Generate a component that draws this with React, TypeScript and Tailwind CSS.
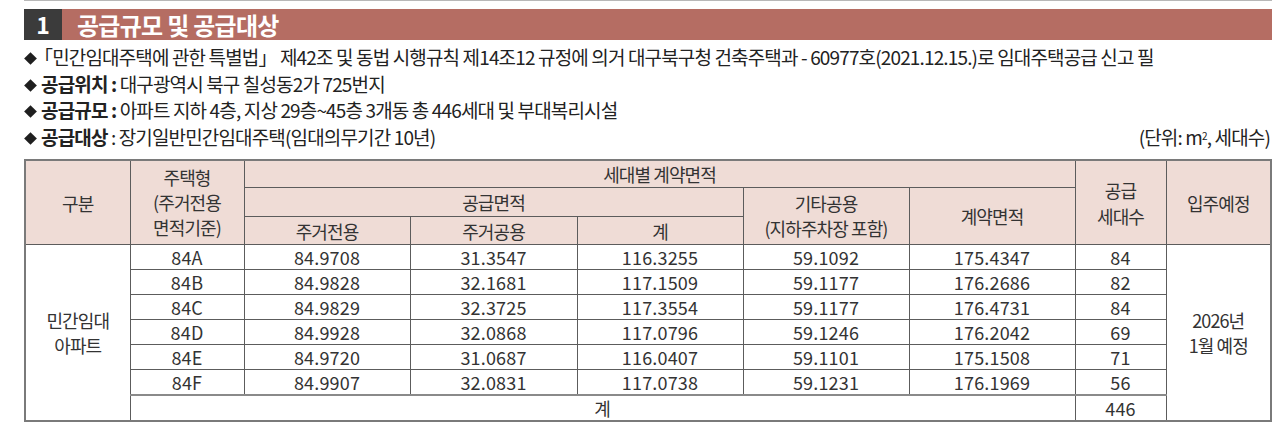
import React from 'react';

const rows = [
  { type: '84A', a: '84.9708', b: '31.3547', c: '116.3255', d: '59.1092', e: '175.4347', n: '84' },
  { type: '84B', a: '84.9828', b: '32.1681', c: '117.1509', d: '59.1177', e: '176.2686', n: '82' },
  { type: '84C', a: '84.9829', b: '32.3725', c: '117.3554', d: '59.1177', e: '176.4731', n: '84' },
  { type: '84D', a: '84.9928', b: '32.0868', c: '117.0796', d: '59.1246', e: '176.2042', n: '69' },
  { type: '84E', a: '84.9720', b: '31.0687', c: '116.0407', d: '59.1101', e: '175.1508', n: '71' },
  { type: '84F', a: '84.9907', b: '32.0831', c: '117.0738', d: '59.1231', e: '176.1969', n: '56' },
];

const rowHeights = ['h-[24px]', 'h-[25px]', 'h-[25px]', 'h-[25px]', 'h-[25px]', 'h-[25px]'];

function Bullet() {
  return (
    <span className="inline-flex w-[15px] items-center justify-start align-middle mr-[2px] -mt-[3px]">
      <span className="block h-[9px] w-[9px] rotate-45 bg-[#1f1f1f] ml-[2px]" />
    </span>
  );
}

const th = 'border border-[#5c5c5c] bg-[#efdcd6] font-normal text-center align-middle p-0 tracking-[-0.05em]';
const td = 'border border-[#5c5c5c] text-center align-middle p-0';

export default function App() {
  return (
    <div
      className="w-[1283px] h-[426px] bg-white overflow-hidden text-[#222]"
      style={{ fontFamily: '"Noto Sans CJK KR", "Noto Sans", sans-serif' }}
    >
      <div className="ml-[24px] w-[1248px]">
        <div className="h-px bg-[#b8b8b8]" />

        {/* section title */}
        <div className="mt-[8px] flex h-[31px]">
          <div className="flex w-[38px] items-center justify-center bg-[#3b3b3b] text-[23px] font-bold text-white">
            1
          </div>
          <div className="flex flex-1 items-center bg-[#b56d63] pl-[15px] text-[24px] font-bold tracking-[-0.03em] text-white">
            공급규모 및 공급대상
          </div>
        </div>

        {/* notes */}
        <div className="mt-[4px] text-[19px] leading-[26.7px] tracking-[-0.045em] text-[#222]">
          <div className="whitespace-nowrap">
            <Bullet />
            <span className="-ml-[7px]">「민간임대주택에 관한 특별법」</span> 제42조 및 동법 시행규칙 제14조12 규정에 의거 대구북구청 건축주택과 - 60977호(2021.12.15.)로 임대주택공급 신고 필
          </div>
          <div className="whitespace-nowrap">
            <Bullet />
            <span className="font-bold">공급위치 :</span> 대구광역시 북구 칠성동2가 725번지
          </div>
          <div className="whitespace-nowrap">
            <Bullet />
            <span className="font-bold">공급규모 :</span> 아파트 지하 4층, 지상 29층~45층 3개동 총 446세대 및 부대복리시설
          </div>
          <div className="flex justify-between whitespace-nowrap">
            <div>
              <Bullet />
              <span className="font-bold">공급대상</span> : 장기일반민간임대주택(임대의무기간 10년)
            </div>
            <div className="pr-[2px]">
              (단위: m<sup className="text-[10px]">2</sup>, 세대수)
            </div>
          </div>
        </div>

        {/* table */}
        <table className="mt-[8px] w-full table-fixed border-collapse border-2 border-[#7a7a7a] text-[18px] leading-[24px] tracking-[0.01em] text-[#333]">
          <colgroup>
            <col className="w-[105px]" />
            <col className="w-[114px]" />
            <col className="w-[166px]" />
            <col className="w-[167px]" />
            <col className="w-[166px]" />
            <col className="w-[166px]" />
            <col className="w-[166px]" />
            <col className="w-[91px]" />
            <col />
          </colgroup>
          <thead>
            <tr className="h-[28px]">
              <th rowSpan={3} className={th}>구분</th>
              <th rowSpan={3} className={th}>
                <div className="leading-[25px]">주택형<br />(주거전용<br />면적기준)</div>
              </th>
              <th colSpan={5} className={th}>세대별 계약면적</th>
              <th rowSpan={3} className={th}>
                <div className="leading-[26px]">공급<br />세대수</div>
              </th>
              <th rowSpan={3} className={th}>입주예정</th>
            </tr>
            <tr className="h-[29px]">
              <th colSpan={3} className={th}>공급면적</th>
              <th rowSpan={2} className={th}>
                <div className="leading-[25px]">기타공용<br />(지하주차장 포함)</div>
              </th>
              <th rowSpan={2} className={th}>계약면적</th>
            </tr>
            <tr className="h-[28px]">
              <th className={th}>주거전용</th>
              <th className={th}>주거공용</th>
              <th className={th}>계</th>
            </tr>
          </thead>
          <tbody>
            {rows.map((r, i) => (
              <tr key={r.type} className={rowHeights[i]}>
                {i === 0 && (
                  <td rowSpan={7} className={`${td} tracking-[-0.05em] leading-[25px]`}>
                    민간임대<br />아파트
                  </td>
                )}
                <td className={td}>{r.type}</td>
                <td className={td}>{r.a}</td>
                <td className={td}>{r.b}</td>
                <td className={td}>{r.c}</td>
                <td className={td}>{r.d}</td>
                <td className={td}>{r.e}</td>
                <td className={td}>{r.n}</td>
                {i === 0 && (
                  <td rowSpan={7} className={`${td} tracking-[-0.05em] leading-[25px]`}>
                    2026년<br />1월 예정
                  </td>
                )}
              </tr>
            ))}
            <tr className="h-[24px]">
              <td colSpan={6} className={`${td} border-t-2 border-t-[#8a8a8a]`}>계</td>
              <td className={`${td} border-t-2 border-t-[#8a8a8a]`}>446</td>
            </tr>
          </tbody>
        </table>
      </div>
    </div>
  );
}
